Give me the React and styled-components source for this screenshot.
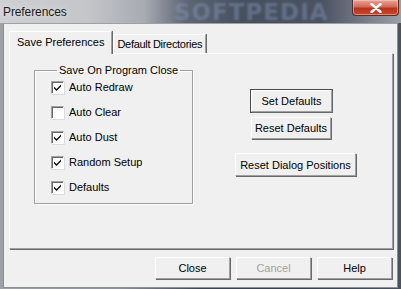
import React, { useState } from 'react';
import styled, { createGlobalStyle } from 'styled-components';

const GlobalStyle = createGlobalStyle`
    html, body {
        margin: 0;
        padding: 0;
        background: #2c3240;
    }
    body {
        font-family: "Liberation Sans", Arial, sans-serif;
        font-size: 11px;
        color: #000;
    }
`

const Frame = styled.div`
    width: 401px;
    height: 289px;
    box-sizing: border-box;
    display: flex;
    flex-direction: column;
    padding: 0 3px 2px 3px;
    background: linear-gradient(90deg, #9ea1a6 0%, #8c9099 30%, #3c4454 50%, #38404f 75%, #4a5160 100%);
    position: relative;
    overflow: hidden;
`

const TitleBar = styled.div`
    height: 23px;
    flex: none;
    display: flex;
    align-items: center;
    margin: 0 -3px;
    padding-left: 3px;
    background: linear-gradient(90deg, #cfd0d3 0%, #c3c5c9 22%, #a7abb2 36%, #5f6776 46%, #46505f 60%, #4a5262 80%, #7b808b 92%, #9b9fa6 100%);
    position: relative;
`

const Title = styled.span`
    font-size: 12px;
    color: #1a1a1a;
    text-shadow: 0 0 6px rgba(255, 255, 255, 0.8);
    letter-spacing: -0.1px;
`

const Watermark = styled.span`
    position: absolute;
    left: 174px;
    top: -1px;
    font-family: "DejaVu Sans", sans-serif;
    font-weight: bold;
    font-size: 23px;
    letter-spacing: 1px;
    color: rgba(140, 160, 195, 0.4);
    filter: blur(1px);
`

const CloseBox = styled.div`
    position: absolute;
    right: 2px;
    top: 0;
    width: 45px;
    height: 15px;
    border: 1px solid #5a2a24;
    border-top: none;
    border-radius: 0 0 4px 4px;
    background: linear-gradient(180deg, #e7a595 0%, #d46a55 45%, #b8321c 55%, #c8462c 100%);
    display: flex;
    align-items: center;
    justify-content: center;
    box-shadow: inset 0 0 0 1px rgba(255, 210, 200, 0.5);
`

const Client = styled.div`
    flex: 1;
    background: #f0f0f0;
    border: 1px solid #8a8e96;
    border-top-color: #9da0a6;
    display: flex;
    flex-direction: column;
    padding: 7px 4px 8px 5px;
`

const TabRow = styled.div`
    display: flex;
    align-items: flex-end;
    height: 22px;
    position: relative;
    z-index: 1;
`

const Tab = styled.div`
    box-sizing: border-box;
    height: ${p => (p.$active ? '23px' : '19px')};
    padding: 0 ${p => (p.$active ? '7px' : '3px')};
    margin-bottom: ${p => (p.$active ? '-1px' : '0')};
    padding-bottom: ${p => (p.$active ? '3px' : '0')};
    display: flex;
    align-items: center;
    white-space: nowrap;
    background: #f0f0f0;
    border-top: 1px solid #fff;
    border-left: 1px solid #fff;
    border-right: 1px solid #a0a0a0;
    box-shadow: 1px 0 0 #696969;
    margin-right: 1px;
    cursor: default;
    color: #000;
    font-size: 11px;
    letter-spacing: ${p => (p.$active ? '0' : '-0.3px')};
`

const Panel = styled.div`
    height: 196px;
    box-sizing: border-box;
    border-top: 1px solid #fff;
    border-left: 1px solid #fff;
    border-right: 1px solid #a0a0a0;
    border-bottom: 1px solid #a0a0a0;
    box-shadow: 1px 1px 0 #696969;
    display: flex;
    padding: 10px 0 0 24px;
`

const GroupBox = styled.fieldset`
    box-sizing: border-box;
    width: 159px;
    height: 140px;
    margin: 0;
    padding: 4px 0 0 16px;
    border: 1px solid #a0a0a0;
    box-shadow: 1px 1px 0 #fff, inset 1px 1px 0 #fff;
    display: flex;
    flex-direction: column;
    gap: 11px;
    legend {
        padding: 0 2px;
        margin-left: 6px;
        font-size: 11px;
        line-height: 12px;
    }
`

const CheckRow = styled.label`
    display: flex;
    align-items: center;
    gap: 5px;
    height: 14px;
    font-size: 11px;
    cursor: default;
`

const Box = styled.span`
    width: 11px;
    height: 11px;
    background: #fff;
    border-top: 1px solid #a0a0a0;
    border-left: 1px solid #a0a0a0;
    border-right: 1px solid #fff;
    border-bottom: 1px solid #fff;
    box-shadow: 1px 1px 0 #dcdcdc, inset 1px 1px 0 #696969;
    display: flex;
    align-items: center;
    justify-content: center;
`

const ButtonColumn = styled.div`
    display: flex;
    flex-direction: column;
    align-items: flex-start;
    margin-left: 42px;
    padding-top: 26px;
`

const Button = styled.button`
    box-sizing: border-box;
    width: ${p => p.$width}px;
    height: ${p => p.$height || 22}px;
    margin-left: ${p => p.$indent || 0}px;
    margin-top: ${p => p.$gap || 0}px;
    padding: 0;
    white-space: nowrap;
    font-family: "Liberation Sans", Arial, sans-serif;
    font-size: 11px;
    color: ${p => (p.disabled ? '#a0a0a0' : '#000')};
    background: #f0f0f0;
    border-top: 1px solid #fff;
    border-left: 1px solid #fff;
    border-right: 1px solid #a0a0a0;
    border-bottom: 1px solid #a0a0a0;
    box-shadow: 1px 1px 0 #696969${p => (p.$default ? ', 0 0 0 1px #4a4a4a' : '')};
    outline: none;
    cursor: default;
`

const Footer = styled.div`
    display: flex;
    justify-content: flex-end;
    gap: 6px;
    margin-top: 8px;
    padding-right: 1px;
`

const Check = () => (
    <svg width="9" height="9" viewBox="0 0 9 9">
        <path d="M1 3.5 L3.5 6 L8 1.5 L8 3.5 L3.5 8 L1 5.5 Z" fill="#111" />
    </svg>
)

const options = [
    { label: 'Auto Redraw', on: true },
    { label: 'Auto Clear', on: false },
    { label: 'Auto Dust', on: true },
    { label: 'Random Setup', on: true },
    { label: 'Defaults', on: true },
]

const App = () => {
    const [checks, setChecks] = useState(options.map(o => o.on));
    const toggle = i => setChecks(c => c.map((v, j) => (j === i ? !v : v)));
    return (
        <>
            <GlobalStyle />
            <Frame>
                <TitleBar>
                    <Title>Preferences</Title>
                    <Watermark>SOFTPEDIA</Watermark>
                    <CloseBox>
                        <svg width="12" height="10" viewBox="0 0 12 10">
                            <path d="M1.5 1 L10.5 9 M10.5 1 L1.5 9" stroke="#fff" strokeWidth="2.6" strokeLinecap="round" />
                        </svg>
                    </CloseBox>
                </TitleBar>
                <Client>
                    <TabRow>
                        <Tab $active>Save Preferences</Tab>
                        <Tab>Default Directories</Tab>
                    </TabRow>
                    <Panel>
                        <GroupBox>
                            <legend>Save On Program Close</legend>
                            {options.map((o, i) => (
                                <CheckRow key={o.label} onClick={() => toggle(i)}>
                                    <Box>{checks[i] && <Check />}</Box>
                                    {o.label}
                                </CheckRow>
                            ))}
                        </GroupBox>
                        <ButtonColumn>
                            <Button $width={81} $indent={16} $default>Set Defaults</Button>
                            <Button $width={80} $indent={16} $gap={5}>Reset Defaults</Button>
                            <Button $width={121} $gap={14} $height={23}>Reset Dialog Positions</Button>
                        </ButtonColumn>
                    </Panel>
                    <Footer>
                        <Button $width={75}>Close</Button>
                        <Button $width={75} disabled>Cancel</Button>
                        <Button $width={75}>Help</Button>
                    </Footer>
                </Client>
            </Frame>
        </>
    );
};

export default App;
